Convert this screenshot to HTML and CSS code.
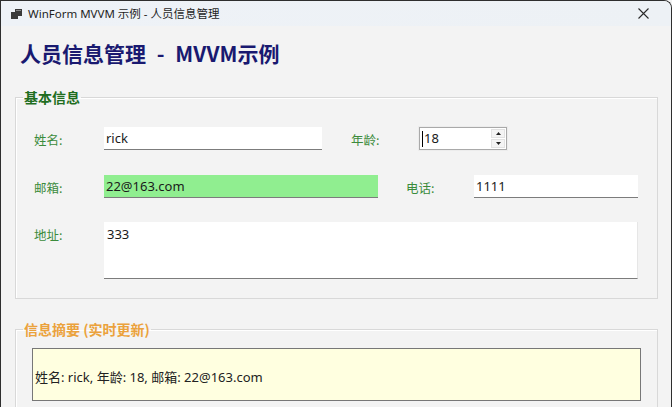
FILE: index.html
```html
<!DOCTYPE html>
<html lang="zh-CN">
<head>
<meta charset="utf-8">
<title>WinForm MVVM 示例 - 人员信息管理</title>
<link rel="stylesheet" href="styles.css">
</head>
<body>
<div class="window">
  <div class="titlebar">
    <svg class="app-icon" width="11" height="10" viewBox="0 0 11 10">
      <rect x="4" y="0" width="7" height="7" fill="#3a3a3a"/>
      <rect x="0" y="3" width="4" height="7" fill="#3a3a3a"/>
      <rect x="4" y="7" width="3" height="3" fill="#3a3a3a"/>
      <rect x="5" y="1" width="5" height="1" fill="#8a8a8a"/>
    </svg>
    <span class="title">WinForm MVVM 示例 - 人员信息管理</span>
    <svg class="close" width="11" height="11" viewBox="0 0 11 11">
      <path d="M0.5 0.5 L10.5 10.5 M10.5 0.5 L0.5 10.5" stroke="#2a2a2a" stroke-width="1.1" fill="none"/>
    </svg>
  </div>
  <div class="client">
    <h1 class="heading">人员信息管理 - MVVM示例</h1>
    <fieldset class="group">
      <legend class="legend legend-basic">基本信息</legend>
      <div class="group-body basic-body">
        <div class="row">
          <span class="lbl">姓名:</span>
          <div class="field name">rick</div>
          <span class="lbl lbl-right lbl-age">年龄:</span>
          <div class="spinner">
            <span class="caret"></span><span class="spin-val">18</span>
            <div class="spin-btns">
              <div class="spin-btn"><svg width="5" height="3" viewBox="0 0 5 3"><path d="M2.5 0 L5 3 L0 3 Z" fill="#222"/></svg></div>
              <div class="spin-btn"><svg width="5" height="3" viewBox="0 0 5 3"><path d="M0 0 L5 0 L2.5 3 Z" fill="#222"/></svg></div>
            </div>
          </div>
        </div>
        <div class="row row2">
          <span class="lbl">邮箱:</span>
          <div class="field email">22@163.com</div>
          <span class="lbl lbl-right lbl-phone">电话:</span>
          <div class="field phone">1111</div>
        </div>
        <div class="row row3">
          <span class="lbl lbl-top">地址:</span>
          <div class="field address">333</div>
        </div>
      </div>
    </fieldset>
    <fieldset class="group group-summary">
      <legend class="legend legend-summary">信息摘要 (实时更新)</legend>
      <div class="group-body summary-body">
        <div class="summary">姓名: rick, 年龄: 18, 邮箱: 22@163.com</div>
      </div>
    </fieldset>
  </div>
</div>
</body>
</html>
```

FILE: styles.css
```css
html, body {
  margin: 0;
  padding: 0;
  background: #f3f3f3;
  overflow: hidden;
}

body {
  font-family: "Segoe UI", "Noto Sans", "Noto Sans CJK SC", sans-serif;
  color: #1a1a1a;
}

.window {
  width: 670px;
  height: 430px;
  border: 1px solid #2e2e2e;
  border-bottom: none;
  border-top-right-radius: 8px;
  background: #f3f3f3;
  overflow: hidden;
}

.titlebar {
  height: 25px;
  display: flex;
  align-items: center;
  padding-left: 10px;
  background: linear-gradient(90deg, #eef2f7, #edf1f5);
}

.app-icon {
  margin-right: 6px;
  flex: none;
}

.title {
  font-family: "Segoe UI", "Noto Sans", "Noto Sans CJK SC", sans-serif;
  font-size: 11.5px;
  color: #1f1f1f;
  line-height: 25px;
}

.close {
  margin-left: auto;
  margin-right: 22px;
}

.client {
  padding: 0 13px 0 14px;
}

.heading {
  margin: 12px 0 0 5px;
  font-family: "Microsoft YaHei", "Noto Sans CJK SC", sans-serif;
  font-size: 21px;
  font-weight: bold;
  line-height: 30px;
  word-spacing: 6px;
  color: #191970;
}

.group {
  margin: 21px 0 0;
  padding: 0;
  border: 1px solid #d8d8d8;
  box-shadow: inset 1px 1px 0 #ffffff;
  min-width: 0;
}

.legend {
  margin-left: 7px;
  padding: 0 1px;
  font-family: "Microsoft YaHei", "Noto Sans CJK SC", sans-serif;
  font-size: 14px;
  font-weight: bold;
  line-height: 16px;
}

.legend-basic {
  color: #1f6e1f;
}

.legend-summary {
  color: #eba23c;
}

.basic-body {
  padding: 22px 0 19px 18px;
}

.row {
  display: flex;
  align-items: center;
  height: 23px;
}

.row2 {
  margin-top: 25px;
}

.row3 {
  margin-top: 24px;
  height: 57px;
  align-items: flex-start;
}

.lbl {
  width: 70px;
  flex: none;
  font-family: "Microsoft YaHei", "Noto Sans CJK SC", sans-serif;
  font-size: 12.5px;
  color: #3b8b3b;
  line-height: 18px;
  padding-top: 2px;
}

.lbl-right {
  width: 68px;
}

.lbl-age {
  margin-left: 29px;
}

.lbl-phone {
  margin-left: 28px;
}

.lbl-top {
  padding-top: 4px;
}

.field {
  box-sizing: border-box;
  height: 23px;
  flex: none;
  background: #ffffff;
  border-bottom: 1px solid #7c7c7c;
  padding-left: 2px;
  font-size: 13px;
  line-height: 22px;
  color: #1a1a1a;
}

.name {
  width: 218px;
}

.email {
  width: 274px;
  background: #90ee90;
}

.phone {
  width: 164px;
}

.address {
  width: 534px;
  height: 57px;
  padding: 3px 3px 0;
  line-height: 18px;
  border-right: 1px solid #e6e6e6;
}

.spinner {
  box-sizing: border-box;
  width: 88px;
  height: 23px;
  flex: none;
  display: flex;
  align-items: center;
  background: #ffffff;
  border: 1px solid #a9a9a9;
  outline: 1px solid #ececec;
}

.caret {
  display: block;
  width: 1px;
  height: 16px;
  background: #000;
  margin-left: 2px;
}

.spin-val {
  font-size: 13px;
  line-height: 21px;
  margin-left: 1px;
}

.spin-btns {
  margin-left: auto;
  margin-right: 1px;
  width: 14px;
  height: 19px;
  display: flex;
  flex-direction: column;
  gap: 1px;
}

.spin-btn {
  flex: 1;
  display: flex;
  align-items: center;
  justify-content: center;
  background: #f4f4f4;
  border: 1px solid #e2e2e2;
}

.group-summary {
  margin-top: 22px;
}

.summary-body {
  padding: 11px 16px 20px 16px;
}

.summary {
  box-sizing: border-box;
  width: 609px;
  height: 53px;
  display: flex;
  align-items: center;
  padding: 3px 2px 0;
  background: #ffffe0;
  border: 1px solid #777777;
  font-family: "Segoe UI", "Noto Sans", "Noto Sans CJK SC", sans-serif;
  font-size: 13px;
  color: #222222;
}
```
